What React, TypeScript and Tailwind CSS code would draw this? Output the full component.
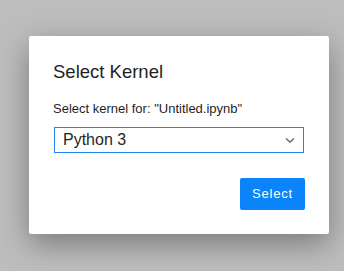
export default function App() {
  return (
    <div
      className="w-[344px] h-[271px] bg-[#bdbdbd] pt-[36px] pl-[29px] overflow-hidden"
      style={{ fontFamily: '"Liberation Sans", Arial, sans-serif' }}
    >
      <div className="w-[300px] h-[198px] bg-white rounded-[2px] shadow-[0_10px_30px_rgba(0,0,0,0.35)] pt-[25px] px-[24px] flex flex-col">
        <div className="text-[18.5px] leading-[22px] text-[#1f1f1f]">Select Kernel</div>
        <div className="mt-[18px] text-[13px] leading-[16px] text-[#1f1f1f]">
          Select kernel for: "Untitled.ipynb"
        </div>
        <div className="mt-[10px] ml-px w-[250px] h-[26px] border border-[#1e86f0] flex items-center justify-between pl-[8px] pr-[6px]">
          <span className="text-[16px] leading-[20px] text-[#1f1f1f]">Python 3</span>
          <svg width="12" height="8" viewBox="0 0 12 8" className="mr-[1px]">
            <polyline points="2,2.5 6,6 10,2.5" fill="none" stroke="#666" strokeWidth="1.4" />
          </svg>
        </div>
        <div className="mt-[25px] flex justify-end">
          <button className="w-[65px] h-[32px] bg-[#0a84f8] rounded-[2px] text-white text-[13px] tracking-[0.06em]">
            Select
          </button>
        </div>
      </div>
    </div>
  );
}
